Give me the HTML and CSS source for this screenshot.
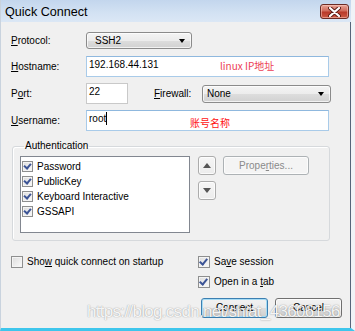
FILE: index.html
```html
<!DOCTYPE html>
<html>
<head>
<meta charset="utf-8">
<link rel="stylesheet" href="styles.css">
</head>
<body>
<div class="win">
  <div class="titlebar">
    <span class="title">Quick Connect</span>
    <div class="close">
      <svg width="13" height="10" viewBox="0 0 13 10"><path d="M2 1 L11 9 M11 1 L2 9" stroke="#5a1a14" stroke-width="4" stroke-linecap="round"/><path d="M2 1 L11 9 M11 1 L2 9" stroke="#fff" stroke-width="2.2" stroke-linecap="round"/></svg>
    </div>
  </div>
  <div class="content">
    <div class="row r1">
      <span class="lbl"><u>P</u>rotocol:</span>
      <div class="select sel-proto"><span>SSH2</span><i class="arrow"></i></div>
    </div>
    <div class="row r2">
      <span class="lbl"><u>H</u>ostname:</span>
      <div class="input focus host"><span class="val">192.168.44.131</span><span class="note note1">linux IP地址</span></div>
    </div>
    <div class="row r3">
      <span class="lbl">P<u>o</u>rt:</span>
      <div class="input port">22</div>
      <span class="lbl fw"><u>F</u>irewall:</span>
      <div class="select sel-fw"><span>None</span><i class="arrow"></i></div>
    </div>
    <div class="row r4">
      <span class="lbl"><u>U</u>sername:</span>
      <div class="input focus user"><span class="val">root</span><i class="caret"></i><span class="note note2">账号名称</span></div>
    </div>
    <fieldset class="group">
      <legend>Authentication</legend>
      <div class="listbox">
        <div class="item"><i class="cb small checked"></i><span>Password</span></div>
        <div class="item"><i class="cb small checked"></i><span>PublicKey</span></div>
        <div class="item"><i class="cb small checked"></i><span>Keyboard Interactive</span></div>
        <div class="item"><i class="cb small checked"></i><span>GSSAPI</span></div>
      </div>
      <div class="updown">
        <div class="btn arrowbtn"><i class="tri up"></i></div>
        <div class="btn arrowbtn"><i class="tri down"></i></div>
      </div>
      <div class="btn props">Prope<u>r</u>ties...</div>
    </fieldset>
    <div class="bottom">
      <div class="leftcol">
        <div class="check"><i class="cb"></i><span>Sho<u>w</u> quick connect on startup</span></div>
      </div>
      <div class="rightcol">
        <div class="check"><i class="cb checked"></i><span>Sa<u>v</u>e session</span></div>
        <div class="check second"><i class="cb checked"></i><span>Open in a <u>t</u>ab</span></div>
        <div class="buttons">
          <div class="btn push default">Connect</div>
          <div class="btn push">Cancel</div>
        </div>
      </div>
    </div>
  </div>
  <div class="watermark">https://blog.csdn.net/shiat_43606156</div>
</div>
</body>
</html>
```
FILE: styles.css
```css
* { box-sizing: border-box; }
html, body { margin: 0; padding: 0; }
body {
  width: 355px; height: 331px; overflow: hidden;
  background: #f0f0f0;
  font-family: "Liberation Sans", Arial, sans-serif;
  font-size: 10px; color: #000;
}
u { text-decoration: underline; text-underline-offset: 1px; }
.win {
  position: relative;
  width: 355px; height: 331px;
  display: flex; flex-direction: column;
  background: #f0f0f0;
  border-left: 1px solid #c9d3de;
  border-right: 4px solid #f0f3f7;
  border-bottom: 3px solid #3ec6ec;
  box-shadow: inset -1px 0 0 #56657a;
}
.titlebar {
  height: 22px; flex: none;
  display: flex; align-items: flex-start; justify-content: space-between;
  background: linear-gradient(#c3d6ed, #d3e2f3 60%, #dbe7f5);
  padding: 0 2px 0 4px;
}
.title {
  font-size: 12.6px; color: #000; padding-top: 5px; line-height: 14px;
}
.close {
  margin-top: 4px; margin-right: 0;
  width: 29px; height: 15px;
  border: 1px solid #6b2b24; border-radius: 3px;
  background: linear-gradient(#e8a496, #d06b5b 45%, #b93a2a 55%, #cc5a44);
  display: flex; align-items: center; justify-content: center;
  box-shadow: inset 0 0 0 1px rgba(255,210,200,0.5);
}
.close svg { display: block; }
.content {
  flex: 1;
  padding: 10px 0 0 10px;
}
.row { display: flex; align-items: center; }
.r1 { height: 17px; }
.r2 { height: 21px; margin-top: 7px; }
.r3 { height: 21px; margin-top: 6px; }
.r4 { height: 21px; margin-top: 6px; }
.lbl { width: 75px; flex: none; line-height: 12px; }
.lbl.fw { width: 48px; margin-left: 26px; }
.select {
  position: relative; height: 17px;
  border: 1px solid #8b8b8b; border-radius: 3px;
  background: linear-gradient(#f4f4f4, #ececec 50%, #dddddd 51%, #d1d1d1);
  padding: 1px 0 0 8px; line-height: 13px;
  box-shadow: inset 0 0 0 1px rgba(255,255,255,0.7);
}
.sel-proto { width: 106px; }
.sel-fw { width: 129px; height: 18px; padding-left: 4px; line-height: 14px; }
.arrow {
  position: absolute; right: 6px; top: 6px;
  width: 0; height: 0;
  border-left: 3.5px solid transparent; border-right: 3.5px solid transparent;
  border-top: 4px solid #000;
}
.input {
  height: 21px;
  background: #fff;
  border: 1px solid #c9c9c9;
  padding: 2px 0 0 2px; line-height: 12px;
}
.input.focus { border-color: #a9cbe9; border-top-color: #8fb8de; }
.host, .user { width: 243px; display: flex; align-items: flex-start; }
.port { width: 42px; }
.val { flex: none; }
.caret { flex: none; display: block; width: 1px; height: 13px; background: #000; margin-top: -1px; }
.note {
  flex: none;
  font-family: "Noto Sans CJK SC", "Liberation Sans", sans-serif;
  font-size: 10px; line-height: 12px;
}
.note1 { width: 50px; margin: 1px 0 0 auto; margin-right: 58px; color: #ec3e55; white-space: nowrap; }
.note2 { width: 41px; margin: 4px 0 0 auto; margin-right: 97px; color: #ff1111; white-space: nowrap; }
.group {
  margin: 9px 0 0 1px; width: 318px;
  padding: 4px 7px 7px 7px;
  border: 1px solid #d6d9dc; border-radius: 3px;
  box-shadow: inset 1px 1px 0 #fff;
  display: flex; align-items: flex-start;
  min-width: 0;
}
.group legend {
  padding: 0 1px; margin-left: 4px; line-height: 12px; color: #000;
}
.listbox {
  width: 170px; height: 77px; flex: none;
  background: #fff; border: 1px solid #828790;
  padding: 2px 0 0 1px;
}
.item { display: flex; align-items: center; height: 15px; }
.item span { margin-left: 4px; line-height: 12px; }
.cb {
  display: inline-block; flex: none;
  width: 12px; height: 12px;
  border: 1px solid #8e8f8f;
  background: linear-gradient(135deg, #dcdcdc, #fbfbfb);
  box-shadow: inset 0 0 0 1px #f4f4f4;
  position: relative;
}
.cb.small { width: 11px; height: 11px; }
.cb.checked::after {
  content: ""; position: absolute;
  left: 2px; top: 0px; width: 3px; height: 6px;
  border-right: 2px solid #3c5496; border-bottom: 2px solid #3c5496;
  transform: rotate(40deg);
}
.cb.small.checked::after { left: 2px; top: 0; width: 3px; height: 5px; }
.updown { display: flex; flex-direction: column; margin-left: 8px; gap: 6px; }
.btn {
  border: 1px solid #707070; border-radius: 3px;
  background: linear-gradient(#f2f2f2, #ebebeb 50%, #dddddd 51%, #cfcfcf);
  box-shadow: inset 0 0 0 1px rgba(255,255,255,0.75);
  display: flex; align-items: center; justify-content: center;
}
.arrowbtn { width: 18px; height: 19px; border-color: #acacac; background: linear-gradient(#f6f6f6, #ececec); }
.tri { width: 0; height: 0; border-left: 4.5px solid transparent; border-right: 4.5px solid transparent; }
.tri.up { border-bottom: 5px solid #555; }
.tri.down { border-top: 5px solid #555; }
.props {
  width: 86px; height: 19px; margin-left: 7px;
  border-color: #adb2b5; background: #f4f4f4; color: #8a8a8a;
  line-height: 12px;
}
.bottom { display: flex; margin-top: 15px; }
.leftcol { width: 187px; flex: none; }
.check { display: flex; align-items: center; height: 12px; }
.check span { margin-left: 4px; line-height: 12px; }
.check.second { margin-top: 8px; }
.buttons { display: flex; gap: 7px; margin: 10px 0 0 3px; }
.push { width: 67px; height: 20px; line-height: 12px; }
.push.default { border-color: #3c7fb1; box-shadow: inset 0 0 0 1px #a6dcf5; }
.watermark {
  position: absolute; left: 86px; top: 302px;
  font-family: "Liberation Sans", Arial, sans-serif;
  font-size: 17px; letter-spacing: -0.7px; line-height: 20px;
  color: rgba(255,255,255,0.92);
  text-shadow: 0 0 1px rgba(0,0,0,0.35), 0 0 2px rgba(0,0,0,0.12);
  white-space: nowrap;
}
```
